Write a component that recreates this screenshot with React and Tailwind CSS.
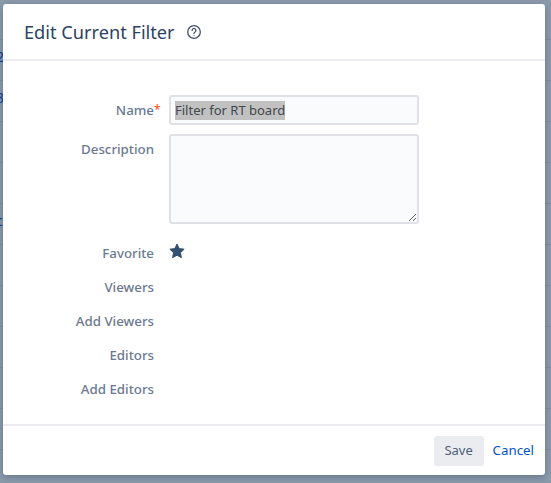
import React from "react";

const rows = ["", "2", "3", "", "", "c", "", "", "i", "", "", ""];

const Field = ({ label, required, children, className, labelClass }) => (
  <div className={"flex " + (className || "")}>
    <div className={"w-[151px] shrink-0 text-right text-[13.3px] font-medium leading-[20px] text-[#6b7990] " + (labelClass || "")}>
      {label}
      {required && <span className="absolute text-[12px] text-[#ff5630]">*</span>}
    </div>
    <div className="ml-[15px] flex-1">{children}</div>
  </div>
);

const App = () => {
  return (
    <div className="relative h-[483px] w-[551px] overflow-hidden bg-[#8b9aab] font-['Noto_Sans',sans-serif]">
      {/* page behind the dialog */}
      <div className="mt-[-1px]">
        {rows.map((r, i) => (
          <div
            key={i}
            className="flex h-[41px] items-center border-b border-[#7f8ea0] pb-[7px] text-[14px] text-[#0b3f9e]"
          >
            <span className={"ml-[-4px] " + (r === "i" ? "text-[#4a4a9e]" : "")}>{r}</span>
          </div>
        ))}
      </div>

      {/* dialog */}
      <div className="absolute left-[3px] top-[4px] flex h-[471px] w-[542px] flex-col rounded-[3px] bg-white shadow-[0_2px_6px_rgba(9,30,66,0.3)]">
        <div className="flex h-[57px] shrink-0 items-center gap-[11px] border-b-2 border-[#ebecf0] pl-[21px] pt-[1px]">
          <h2 className="text-[18.2px] leading-[24px] text-[#2c4364]">Edit Current Filter</h2>
          <svg width="16" height="16" viewBox="0 0 16 16" fill="none" stroke="#42526e" strokeWidth="1.3">
            <circle cx="8" cy="8" r="6.3" />
            <path d="M6.1 6.4a1.9 1.9 0 1 1 2.9 1.6c-.7.4-1 .8-1 1.5" strokeLinecap="round" />
            <circle cx="8" cy="11.4" r="0.5" fill="#42526e" stroke="none" />
          </svg>
        </div>

        <div className="flex-1 pt-[34px]">
          <Field label="Name" required className="items-center">
            <div className="flex h-[30px] w-[250px] items-center rounded-[3px] border-2 border-[#dfe1e6] bg-[#fafbfc] pl-[4px] text-[13px] text-[#42484f]">
              <span className="bg-[#c1c1c1] leading-[19px]">Filter for RT board</span>
            </div>
          </Field>
          <Field label="Description" className="mt-[9px]" labelClass="pt-[5px]">
            <textarea className="block h-[90px] w-[250px] rounded-[3px] border-2 border-[#dfe1e6] bg-[#fafbfc] outline-none" />
          </Field>
          <Field label="Favorite" className="mt-[19px] h-[34px]">
            <svg width="16" height="16" viewBox="0 0 24 24" fill="#344f70">
              <path d="M12 1.5l3.2 6.9 7.5.9-5.5 5.2 1.4 7.5L12 18.3l-6.6 3.7 1.4-7.5L1.3 9.3l7.5-.9z" stroke="#344f70" strokeWidth="1.5" strokeLinejoin="round" />
            </svg>
          </Field>
          <Field label="Viewers" className="h-[34px]" />
          <Field label="Add Viewers" className="h-[34px]" />
          <Field label="Editors" className="h-[34px]" />
          <Field label="Add Editors" className="h-[34px]" />
        </div>

        <div className="flex h-[51px] shrink-0 items-center justify-end gap-[9px] border-t-2 border-[#ebecf0] pr-[11px] pt-[1px]">
          <button className="h-[30px] w-[50px] rounded-[3px] bg-[#ebecf0] text-[13px] text-[#505f79]">Save</button>
          <a className="text-[13.3px] text-[#0052cc]">Cancel</a>
        </div>
      </div>
    </div>
  );
};

export default App;
